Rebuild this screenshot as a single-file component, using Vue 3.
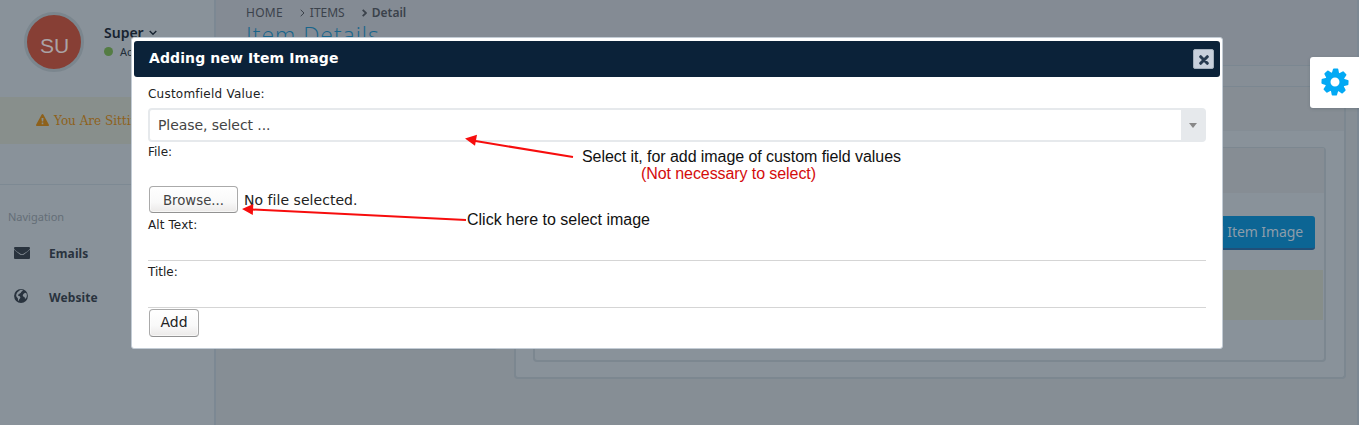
<script setup>
const navItems = [
  { label: 'Emails', icon: 'mail' },
  { label: 'Website', icon: 'globe' }
]
const crumbs = ['HOME', 'ITEMS', 'Detail']
</script>

<template>
  <div class="app">
    <aside class="sidebar">
      <div class="profile">
        <div class="avatar">SU</div>
        <div class="who">
          <div class="name">Super
            <svg width="8" height="6" viewBox="0 0 8 6"><path d="M.7 1 4 4.3 7.3 1" fill="none" stroke="#172330" stroke-width="1.3" /></svg>
          </div>
          <div class="status"><i></i>Active</div>
        </div>
      </div>
      <div class="notice">
        <svg width="13" height="12" viewBox="0 0 13 12"><path fill-rule="evenodd" d="M5.7.6Q6.5-.5 7.3.6L12.8 10.5Q13.2 12 12 12H1Q-.2 12 .2 10.5ZM5.5 4 5.8 7.4H7.2L7.5 4ZM5.7 8.6V10.3H7.3V8.6Z" fill="#8e611b" /></svg>
        <span>You Are Sitting</span>
      </div>
      <div class="nav-title">Navigation</div>
      <nav>
        <div v-for="item in navItems" :key="item.label" class="nav-item">
          <svg v-if="item.icon === 'mail'" width="16" height="12" viewBox="0 0 16 12"><path d="M1 0H15Q16 0 16 1.4C15.5 3 12 5 9.5 6.8Q8 7.8 6.5 6.8C4 5 .5 3 0 1.4Q0 0 1 0ZM0 2.6C1.5 4.3 4 5.9 6 7.4Q8 8.8 10 7.4C12 5.9 14.5 4.3 16 2.6V11Q16 12 15 12H1Q0 12 0 11Z" fill="#29333e" /></svg>
          <svg v-else class="globe" width="14" height="14" viewBox="0 0 14 14"><circle cx="7" cy="7" r="6.9" fill="#29333e" /><path d="M6.5.8 9 1 8.1 2.2 7.3 2.7 6.7 4 5.6 4.4 5.1 5.3 3.9 5.8 4.2 6.8 5.5 7.1 6.4 8.3 6 9.6 5.1 10.5 4.8 12 4.1 11.5 3.8 9.3 2.5 7.7 2.1 6 3 3.8 4.6 2.2ZM11 3.8 12.4 4.3 12.9 6 12.7 8 11.8 9.6 11 9.7 10.5 8 9.2 7.4 8.7 6.3 9.4 5Z" fill="#89929a" /></svg>
          <span>{{ item.label }}</span>
        </div>
      </nav>
    </aside>

    <main class="main">
      <header class="page-head">
        <div class="crumbs">
          <template v-for="(crumb, i) in crumbs" :key="crumb">
            <svg v-if="i" :class="{ last: i === 2 }" width="5" height="8" viewBox="0 0 5 8"><path d="M.7.8 4 4 .7 7.2" fill="none" stroke="#3b424b" /></svg>
            <span :class="['c' + i]">{{ crumb }}</span>
          </template>
        </div>
        <h1>Item Details</h1>
      </header>
      <div class="toolbar"></div>
      <div class="columns">
        <section class="summary"></section>
        <section class="panel">
          <div class="panel-head"></div>
          <div class="inner">
            <div class="inner-head"></div>
            <div class="actions"><span class="image-btn">Add Item Image</span></div>
            <div class="alert"></div>
          </div>
        </section>
      </div>
    </main>

    <div class="modal">
      <div class="modal-head">
        <span>Adding new Item Image</span>
        <button class="close" aria-label="Close">
          <svg width="10" height="10" viewBox="0 0 10 10"><path d="M1.7 1.7 8.3 8.3M8.3 1.7 1.7 8.3" stroke="#273a50" stroke-width="3" stroke-linecap="round" /></svg>
        </button>
      </div>
      <div class="form">
        <label class="l1">Customfield Value:</label>
        <div class="select"><span>Please, select ...</span><b><svg width="8" height="5" viewBox="0 0 8 5"><path d="M0 0H8L4 5Z" fill="#888" /></svg></b></div>
        <label class="l2">File:</label>
        <div class="file"><button class="btn browse">Browse...</button><span>No file selected.</span></div>
        <label class="l3">Alt Text:</label>
        <div class="line"></div>
        <label class="l4">Title:</label>
        <div class="line"></div>
        <button class="btn add">Add</button>
      </div>
    </div>

    <svg class="notes" width="1359" height="425" viewBox="0 0 1359 425">
      <g stroke="#f70d0d" stroke-width="2" fill="none"><path d="M573 157 474 140.8M466 220 252 209.5" /></g>
      <path d="M465 138.5 477 134.8 475 145.8ZM242 209 253.3 204 252.8 215Z" fill="#f70d0d" />
      <g font-family="Liberation Sans, Arial, sans-serif" font-size="16" fill="#111">
        <text x="582" y="162" textLength="319">Select it, for add image of custom field values</text>
        <text x="641" y="179" textLength="175" fill="#d40c0c">(Not necessary to select)</text>
        <text x="467" y="225" textLength="183">Click here to select image</text>
      </g>
    </svg>

    <div class="settings">
      <svg width="28" height="28" viewBox="-14 -14 28 28">
        <g fill="#03a9f4"><path v-for="n in 8" :key="n" :transform="`rotate(${n * 45 + 3})`" d="M-3.7-8.5-2.7-12.6Q-2.5-13.5-1.8-13.5H1.8Q2.5-13.5 2.7-12.6L3.7-8.5Z" /></g>
        <circle r="7.2" fill="none" stroke="#03a9f4" stroke-width="5.4" />
      </svg>
    </div>
  </div>
</template>

<style>
body { margin: 0; overflow: hidden; }
</style>

<style scoped>
* { box-sizing: border-box; }
.app { position: relative; display: flex; width: 1359px; height: 425px; overflow: hidden; background: #868e95; font-family: "Noto Sans", sans-serif; }
svg { display: block; flex: none; }
.sidebar { width: 216px; flex: none; background: #89929a; border-right: 2px solid #7c8893; }
.profile { display: flex; height: 97px; padding: 12px 0 0 24px; }
.avatar { width: 60px; height: 60px; border: 3px solid #7b868e; border-radius: 50%; background: #873f35; color: #aaa3a6; font: 21px/62px "Liberation Sans", sans-serif; text-align: center; padding-left: 1px; }
.who { margin-left: 20px; padding-top: 10px; }
.name { display: flex; align-items: center; gap: 5px; height: 20px; font-size: 14px; font-weight: 600; color: #172330; }
.name svg { margin-top: 2px; }
.status { display: flex; align-items: center; gap: 7px; height: 18px; font-size: 11px; color: #222e39; }
.status i { width: 9px; height: 9px; border-radius: 50%; background: #547c43; }
.notice { display: flex; align-items: center; gap: 5px; height: 47px; padding-left: 36px; background: #888f8c; color: #8e611b; font: 12px/20px "DejaVu Serif", serif; white-space: nowrap; }
.notice svg { margin-top: -2px; }
.nav-title { height: 50px; margin-top: 40px; border-top: 1px solid #7d8993; padding: 24px 0 0 8px; font-size: 11px; line-height: 16px; color: #646e77; }
.nav-item { display: flex; align-items: center; height: 44px; padding-left: 14px; font-size: 12px; font-weight: 700; letter-spacing: .1px; color: #29333e; }
nav { margin-top: -3px; }
.nav-item span { margin-left: 19px; }
.nav-item .globe { margin-top: -2px; }
.nav-item .globe + span { margin-left: 21px; }
.main { flex: 1; min-width: 0; border-right: 2px solid #7c8893; }
.page-head { height: 66px; padding: 2px 0 0 30px; background: #848b94; border-bottom: 1px solid #7b8791; }
.crumbs { display: flex; align-items: center; height: 20px; font-size: 12px; color: #3b424b; }
.crumbs svg { margin: 1px 5px 0 17px; }
.crumbs .c0 { letter-spacing: .25px; }
.crumbs .c2 { font-weight: 600; }
.crumbs .last path { stroke-width: 1.8; }
h1 { margin: -3px 0 0; font: 300 23px/32px "Open Sans", sans-serif; letter-spacing: .95px; color: #18658b; }
.toolbar { height: 21px; background: #868e96; border-bottom: 1px solid #7b8791; }
.columns { display: flex; align-items: flex-start; padding-left: 15px; gap: 17px; }
.summary { width: 266px; height: 263px; border-bottom: 2px solid #7d8891; border-radius: 3px; }
.panel { width: 832px; height: 292px; padding: 0 17px; background: #89929a; border: 1px solid #7c8790; border-width: 0 2px 2px; border-radius: 0 0 4px 4px; }
.panel-head { height: 44px; margin: 0 -17px; background: #868d94; border-bottom: 1px solid #848d95; }
.inner { width: 793px; height: 215px; margin-top: 16px; border: 1px solid #7c8790; border-width: 1px 2px 2px; border-radius: 4px; }
.inner-head { height: 45px; background: #868d94; }
.actions { display: flex; justify-content: flex-end; height: 57px; margin-top: 23px; margin-bottom: -3px; padding-right: 9px; }
.image-btn { width: 134px; height: 34px; padding-right: 12px; border-bottom: 2px solid #204f78; border-radius: 3px; background: #0c6594; color: #8d9daa; font-size: 14px; line-height: 32px; letter-spacing: -.1px; text-align: right; }
.alert { height: 50px; margin-right: 1px; background: #878e8a; }
.modal { position: absolute; left: 131px; top: 37px; width: 1092px; height: 312px; padding: 3px 2px; border: 1px solid #c3ccd5; border-radius: 3px; background: #fff; }
.modal-head { display: flex; align-items: center; justify-content: space-between; height: 36px; padding: 0 6px 0 15px; border-radius: 3px; background: #0b2239; color: #fff; font: 700 14px/34px "DejaVu Sans", sans-serif; letter-spacing: .1px; }
.modal-head > span { height: 36px; }
.close { display: flex; align-items: center; justify-content: center; width: 21px; height: 20px; padding: 1px 0 0 1px; border: 1px solid #a2aebb; border-radius: 2px; background: #c8d0dc; }
.form { display: flex; flex-direction: column; padding: 0 14px; font-family: "DejaVu Sans", sans-serif; font-size: 14px; color: #222; }
label { font-size: 12px; line-height: 16px; }
.l1 { padding-top: 9px; height: 31px; letter-spacing: .23px; }
.select { display: flex; height: 34px; border: 2px solid #e6e9ec; border-radius: 4px; color: #444; line-height: 30px; letter-spacing: -.07px; }
.select span { flex: 1; padding-left: 8px; }
.select b { display: flex; align-items: center; justify-content: center; width: 23px; padding-top: 1px; background: #e6e9ec; }
.l2 { height: 44px; padding-top: 2px; }
.file { display: flex; height: 28px; line-height: 28px; letter-spacing: .04px; }
.file span { margin-left: 6px; }
.btn { margin: 0 0 0 1px; padding: 0; border: 1px solid #aaa; border-bottom-color: #929292; border-radius: 4px; background: linear-gradient(#fff, #f9f9f9 60%, #ebe9e8); box-shadow: inset 0 0 0 1px #fff9; font: 14px/25px "DejaVu Sans", sans-serif; color: #222; }
.browse { width: 89px; height: 27px; padding-top: 1px; color: #444; font-size: 13.3px; }
.l3 { height: 16px; margin-top: 3px; letter-spacing: .1px; }
.line { height: 28px; border-bottom: 1px solid #d5d5d5; }
.l4 { height: 16px; margin-top: 3px; }
.add { width: 50px; height: 28px; margin-top: 1px; padding-bottom: 1px; }
.notes { position: absolute; inset: 0; }
.settings { position: absolute; left: 1310px; top: 57px; width: 52px; height: 51px; padding: 11px; border-radius: 3px; background: #fff; box-shadow: 0 1px 3px #39455540; }
</style>
